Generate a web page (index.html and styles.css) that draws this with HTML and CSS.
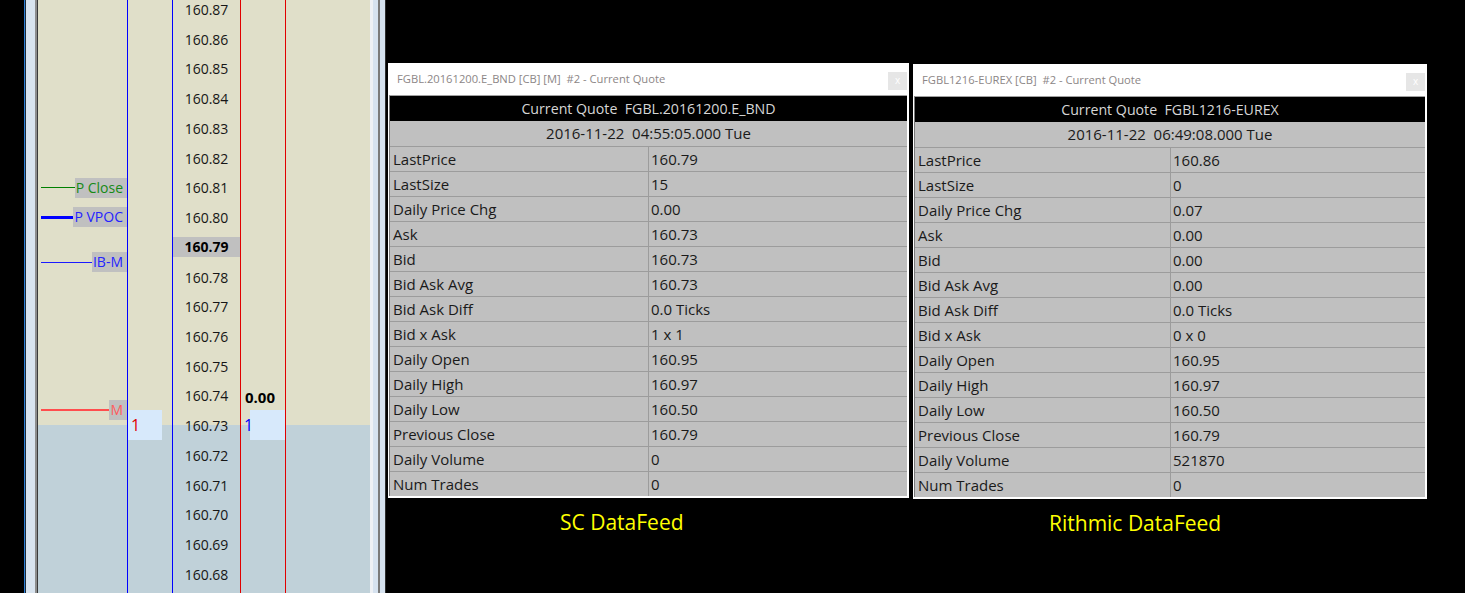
FILE: index.html
```html
<!DOCTYPE html>
<html>
<head>
<meta charset="utf-8">
<link rel="stylesheet" href="styles.css">
</head>
<body>
<div class="screen">
  <div class="chartwin">
    <div class="frame-left"></div>
    <div class="chart">
      <div class="ladder">
        <div class="row"><div class="c-lab"></div><div class="c-bid"></div><div class="c-px">160.87</div><div class="c-ask"></div><div class="c-rest"></div></div>
        <div class="row"><div class="c-lab"></div><div class="c-bid"></div><div class="c-px">160.86</div><div class="c-ask"></div><div class="c-rest"></div></div>
        <div class="row"><div class="c-lab"></div><div class="c-bid"></div><div class="c-px">160.85</div><div class="c-ask"></div><div class="c-rest"></div></div>
        <div class="row"><div class="c-lab"></div><div class="c-bid"></div><div class="c-px">160.84</div><div class="c-ask"></div><div class="c-rest"></div></div>
        <div class="row"><div class="c-lab"></div><div class="c-bid"></div><div class="c-px">160.83</div><div class="c-ask"></div><div class="c-rest"></div></div>
        <div class="row"><div class="c-lab"></div><div class="c-bid"></div><div class="c-px">160.82</div><div class="c-ask"></div><div class="c-rest"></div></div>
        <div class="row"><div class="c-lab"><span class="lvl-line lvl-green"></span><span class="tag tag-green">P Close</span></div><div class="c-bid"></div><div class="c-px">160.81</div><div class="c-ask"></div><div class="c-rest"></div></div>
        <div class="row"><div class="c-lab"><span class="lvl-line lvl-blue-thick"></span><span class="tag tag-blue">P VPOC</span></div><div class="c-bid"></div><div class="c-px">160.80</div><div class="c-ask"></div><div class="c-rest"></div></div>
        <div class="row"><div class="c-lab"><div class="edge-marker"><span class="lvl-line lvl-blue"></span><span class="tag tag-blue">IB-M</span></div></div><div class="c-bid"></div><div class="c-px"><span class="px-last">160.79</span></div><div class="c-ask"></div><div class="c-rest"></div></div>
        <div class="row"><div class="c-lab"></div><div class="c-bid"></div><div class="c-px">160.78</div><div class="c-ask"></div><div class="c-rest"></div></div>
        <div class="row"><div class="c-lab"></div><div class="c-bid"></div><div class="c-px">160.77</div><div class="c-ask"></div><div class="c-rest"></div></div>
        <div class="row"><div class="c-lab"></div><div class="c-bid"></div><div class="c-px">160.76</div><div class="c-ask"></div><div class="c-rest"></div></div>
        <div class="row"><div class="c-lab"></div><div class="c-bid"></div><div class="c-px">160.75</div><div class="c-ask"></div><div class="c-rest"></div></div>
        <div class="row"><div class="c-lab"><div class="edge-marker"><span class="lvl-line lvl-red"></span><span class="tag tag-red">M</span></div></div><div class="c-bid"></div><div class="c-px">160.74</div><div class="c-ask"><span class="chg">0.00</span></div><div class="c-rest"></div></div>
        <div class="row"><div class="c-lab"></div><div class="c-bid bid-box"><span class="qty-bid">1</span></div><div class="c-px">160.73</div><div class="c-ask ask-box"><span class="qty-ask">1</span></div><div class="c-rest"></div></div>
        <div class="row"><div class="c-lab"></div><div class="c-bid"></div><div class="c-px">160.72</div><div class="c-ask"></div><div class="c-rest"></div></div>
        <div class="row"><div class="c-lab"></div><div class="c-bid"></div><div class="c-px">160.71</div><div class="c-ask"></div><div class="c-rest"></div></div>
        <div class="row"><div class="c-lab"></div><div class="c-bid"></div><div class="c-px">160.70</div><div class="c-ask"></div><div class="c-rest"></div></div>
        <div class="row"><div class="c-lab"></div><div class="c-bid"></div><div class="c-px">160.69</div><div class="c-ask"></div><div class="c-rest"></div></div>
        <div class="row"><div class="c-lab"></div><div class="c-bid"></div><div class="c-px">160.68</div><div class="c-ask"></div><div class="c-rest"></div></div>
        <div class="row"><div class="c-lab"></div><div class="c-bid"></div><div class="c-px"></div><div class="c-ask"></div><div class="c-rest"></div></div>
      </div>
    </div>
    <div class="frame-right"></div>
  </div>

  <div class="quotes">
    <div class="panel">
      <div class="win win-sc">
        <div class="titlebar"><span class="title">FGBL.20161200.E_BND [CB] [M]  #2 - Current Quote</span><span class="close">x</span></div>
        <div class="qtable qt-sc">
          <div class="qhead">Current Quote  FGBL.20161200.E_BND</div>
          <div class="qdate">2016-11-22  04:55:05.000 Tue</div>
          <div class="qrow"><div class="qk">LastPrice</div><div class="qv">160.79</div></div>
          <div class="qrow"><div class="qk">LastSize</div><div class="qv">15</div></div>
          <div class="qrow"><div class="qk">Daily Price Chg</div><div class="qv">0.00</div></div>
          <div class="qrow"><div class="qk">Ask</div><div class="qv">160.73</div></div>
          <div class="qrow"><div class="qk">Bid</div><div class="qv">160.73</div></div>
          <div class="qrow"><div class="qk">Bid Ask Avg</div><div class="qv">160.73</div></div>
          <div class="qrow"><div class="qk">Bid Ask Diff</div><div class="qv">0.0 Ticks</div></div>
          <div class="qrow"><div class="qk">Bid x Ask</div><div class="qv">1 x 1</div></div>
          <div class="qrow"><div class="qk">Daily Open</div><div class="qv">160.95</div></div>
          <div class="qrow"><div class="qk">Daily High</div><div class="qv">160.97</div></div>
          <div class="qrow"><div class="qk">Daily Low</div><div class="qv">160.50</div></div>
          <div class="qrow"><div class="qk">Previous Close</div><div class="qv">160.79</div></div>
          <div class="qrow"><div class="qk">Daily Volume</div><div class="qv">0</div></div>
          <div class="qrow"><div class="qk">Num Trades</div><div class="qv">0</div></div>
        </div>
      </div>
      <div class="feed feed-sc">SC DataFeed</div>
    </div>

    <div class="panel">
      <div class="win win-rt">
        <div class="titlebar"><span class="title">FGBL1216-EUREX [CB]  #2 - Current Quote</span><span class="close">x</span></div>
        <div class="qtable qt-rt">
          <div class="qhead">Current Quote  FGBL1216-EUREX</div>
          <div class="qdate">2016-11-22  06:49:08.000 Tue</div>
          <div class="qrow"><div class="qk">LastPrice</div><div class="qv">160.86</div></div>
          <div class="qrow"><div class="qk">LastSize</div><div class="qv">0</div></div>
          <div class="qrow"><div class="qk">Daily Price Chg</div><div class="qv">0.07</div></div>
          <div class="qrow"><div class="qk">Ask</div><div class="qv">0.00</div></div>
          <div class="qrow"><div class="qk">Bid</div><div class="qv">0.00</div></div>
          <div class="qrow"><div class="qk">Bid Ask Avg</div><div class="qv">0.00</div></div>
          <div class="qrow"><div class="qk">Bid Ask Diff</div><div class="qv">0.0 Ticks</div></div>
          <div class="qrow"><div class="qk">Bid x Ask</div><div class="qv">0 x 0</div></div>
          <div class="qrow"><div class="qk">Daily Open</div><div class="qv">160.95</div></div>
          <div class="qrow"><div class="qk">Daily High</div><div class="qv">160.97</div></div>
          <div class="qrow"><div class="qk">Daily Low</div><div class="qv">160.50</div></div>
          <div class="qrow"><div class="qk">Previous Close</div><div class="qv">160.79</div></div>
          <div class="qrow"><div class="qk">Daily Volume</div><div class="qv">521870</div></div>
          <div class="qrow"><div class="qk">Num Trades</div><div class="qv">0</div></div>
        </div>
      </div>
      <div class="feed feed-rt">Rithmic DataFeed</div>
    </div>
  </div>
</div>
</body>
</html>
```

FILE: styles.css
```css
* { box-sizing: border-box; }

body {
  margin: 0;
  background: #000;
  font-family: "Open Sans", "Noto Sans", sans-serif;
}

.screen {
  display: flex;
  width: 1465px;
  height: 593px;
  overflow: hidden;
  background: #000;
}

/* ---------- chart window ---------- */
.chartwin {
  display: flex;
  margin-left: 24px;
  height: 593px;
  flex: none;
}

.frame-left {
  width: 14px;
  background: linear-gradient(to right,
    #2d7fd6 0 1px, #1c2a38 1px 2px, #d9e4ef 2px 11px,
    #8d8d8d 11px 13px, #3a3a3a 13px 14px);
}

.frame-right {
  width: 16px;
  background: linear-gradient(to right,
    #eef1f5 0 3px, #d6e2ef 3px 8px, #7a7a7a 8px 10px,
    #d6e2ef 10px 15px, #2e2e2e 15px 16px);
}

.chart {
  width: 332px;
  height: 593px;
  overflow: hidden;
  background: linear-gradient(to bottom, #e0dfc9 0 425px, #c0d1d9 425px);
}

.ladder { margin-top: -6px; }

.row {
  display: grid;
  grid-template-columns: 89px 45px 68px 45px 85px;
  height: 30px;
  font-size: 14px;
  color: #161616;
}
/* 29.74px average pitch, laid out in whole pixels */
.row:nth-child(3), .row:nth-child(7), .row:nth-child(11),
.row:nth-child(14), .row:nth-child(18) { height: 29px; }

.c-lab {
  position: relative;
  display: flex;
  align-items: center;
  padding-left: 3px;
}

.c-bid { border-left: 1px solid #0000ff; display: flex; align-items: center; }
.c-px {
  border-left: 1px solid #0000ff;
  display: flex;
  align-items: center;
  justify-content: center;
}
.c-ask { border-left: 1px solid #e00000; display: flex; align-items: center; padding-left: 3px; }
.c-rest { border-left: 1px solid #e00000; }

.px-last {
  width: 100%;
  height: 20px;
  line-height: 20px;
  text-align: center;
  background: #c0c0c0;
  font-weight: 700;
  color: #000;
}

.lvl-line { flex: 1; }
.lvl-green { height: 1px; background: #008000; }
.lvl-blue { height: 1px; background: #1a1aff; }
.lvl-blue-thick { height: 3px; background: #0000ff; }
.lvl-red { height: 2px; background: #ff4d4d; }

.tag {
  height: 20px;
  line-height: 20px;
  padding: 0 4px 0 1px;
  background: #c0c0c0;
  font-size: 14px;
}
.tag-green { color: #168a16; }
.tag-blue { color: #2424ff; }
.tag-red { color: #ff5c5c; }

.edge-marker {
  position: absolute;
  left: 3px;
  right: 0;
  bottom: -10px;
  height: 20px;
  display: flex;
  align-items: center;
  z-index: 2;
}

.chg { font-weight: 700; color: #000; padding-top: 3px; font-size: 15px; margin-left: 1px; }

.bid-box {
  background: linear-gradient(to right, #d7e9fb 0 34px, transparent 34px);
  padding-left: 3px;
}
.ask-box {
  background: linear-gradient(to right, transparent 0 9px, #d7e9fb 9px);
}
.qty-bid { color: #e00000; font-size: 16px; }
.qty-ask { color: #0000ff; font-size: 16px; }

/* ---------- quote windows ---------- */
.quotes {
  display: flex;
  align-items: flex-start;
  gap: 4px;
  margin-left: 2px;
  padding-top: 63px;
}

.panel { display: flex; flex-direction: column; }

.win {
  background: #fff;
  padding: 0 2px 2px 1px;
}
.win-sc { width: 521px; }
.win-rt { width: 514px; margin-top: 1px; }

.titlebar {
  height: 32px;
  display: flex;
  align-items: center;
  justify-content: space-between;
  padding-left: 8px;
}
.title {
  font-size: 11.2px;
  color: #8c8686;
  white-space: pre;
  padding-bottom: 1px;
}
.close {
  align-self: flex-end;
  margin-bottom: 5px;
  width: 19px;
  height: 18px;
  background: #e6e6e6;
  color: #fff;
  font-size: 10px;
  line-height: 17px;
  text-align: center;
}

.qtable {
  border-left: 1px solid #7a7a7a;
  border-top: 1px solid #a0a0a0;
  background: #c0c0c0;
  font-size: 15px;
  color: #1a1a1a;
}
.qt-sc .qrow { grid-template-columns: 258px 1fr; }
.qt-rt .qrow { grid-template-columns: 255px 1fr; }

.qhead {
  height: 25px;
  line-height: 25px;
  background: #000;
  color: #d6d6d6;
  text-align: center;
  white-space: pre;
  font-size: 14.2px;
}
.qdate {
  height: 25px;
  line-height: 25px;
  text-align: center;
  white-space: pre;
}
.qrow {
  display: grid;
  height: 25px;
  border-top: 1px solid #9c9c9c;
  line-height: 24px;
}
.qk { padding-left: 3px; }
.qv { border-left: 1px solid #9c9c9c; padding-left: 2px; }

.feed {
  color: #ffff00;
  font-size: 21px;
  line-height: 28px;
  margin-top: 10px;
}
.feed-sc { padding-left: 172px; }
.feed-rt { padding-left: 136px; }
```
